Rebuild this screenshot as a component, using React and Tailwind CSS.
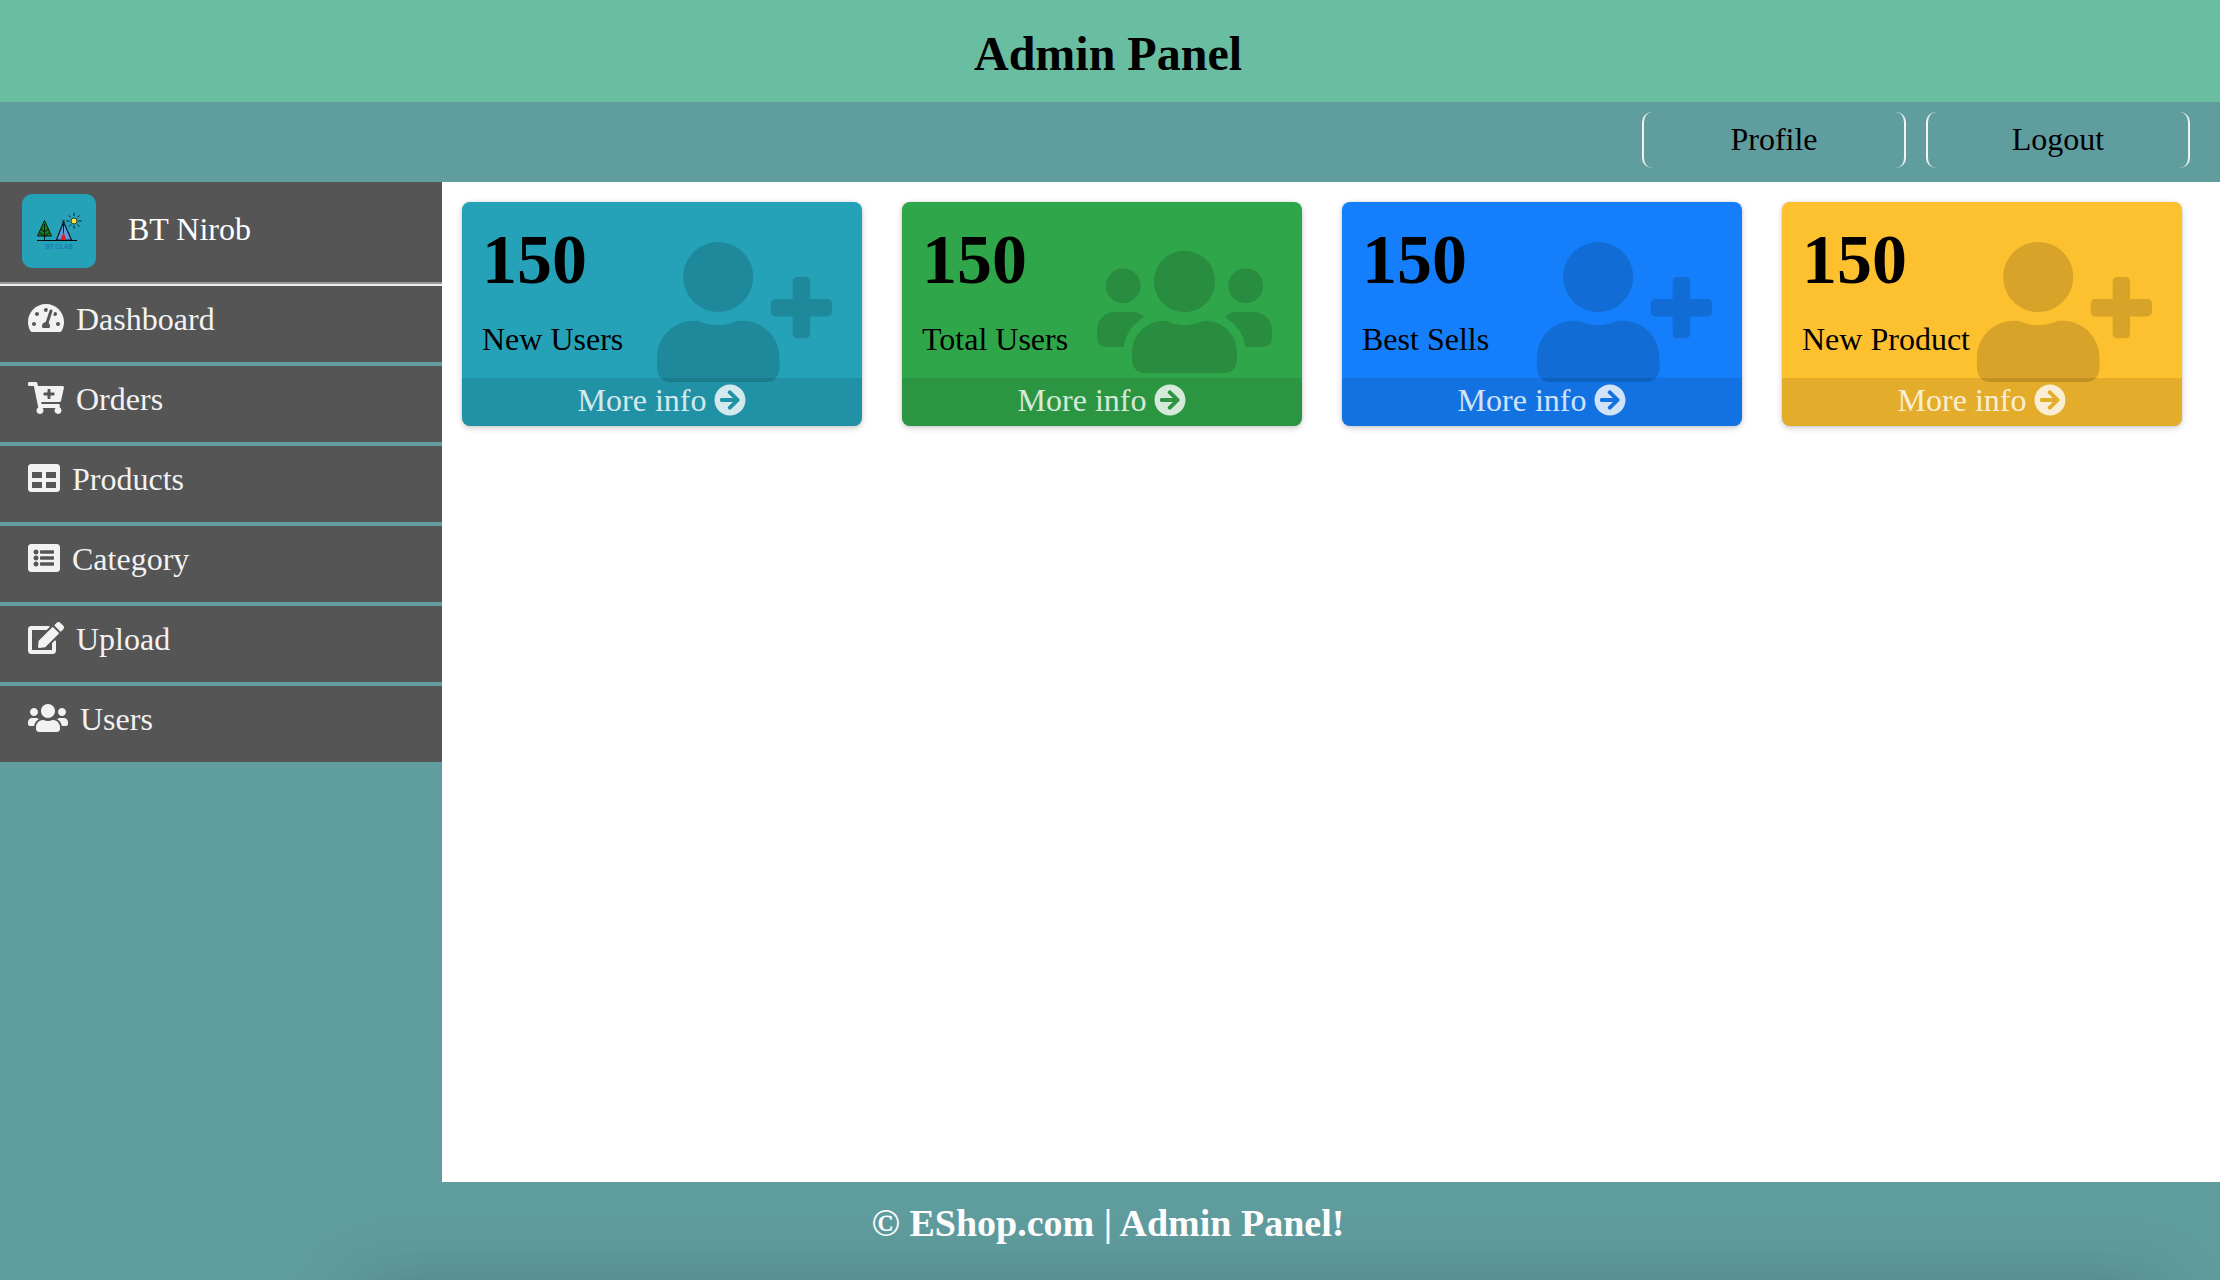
import {
  FaTachometerAlt, FaCartPlus, FaTable, FaListAlt, FaEdit, FaUsers, FaUserPlus, FaArrowCircleRight,
} from "react-icons/fa";

const links = [
  { label: "Dashboard", Icon: FaTachometerAlt, size: "w-9 h-8" },
  { label: "Orders", Icon: FaCartPlus, size: "w-9 h-8" },
  { label: "Products", Icon: FaTable, size: "w-8 h-8" },
  { label: "Category", Icon: FaListAlt, size: "w-8 h-8" },
  { label: "Upload", Icon: FaEdit, size: "w-9 h-8" },
  { label: "Users", Icon: FaUsers, size: "w-10 h-8" },
];

const cards = [
  { label: "New Users", Icon: FaUserPlus, color: "bg-[#25a2b8]" },
  { label: "Total Users", Icon: FaUsers, color: "bg-[#30a64a]" },
  { label: "Best Sells", Icon: FaUserPlus, color: "bg-[#157ffb]" },
  { label: "New Product", Icon: FaUserPlus, color: "bg-[#fdc02f]" },
];

function Logo() {
  return (
    <svg viewBox="0 0 74 74" className="size-[74px] rounded-[10px] bg-[#25a2b8]" aria-label="BT Clab">
      <path d="M22.5 26.5 15.5 42h14z" fill="#168016" stroke="#0b1a10" strokeWidth="1" />
      <path d="M22.5 30v16M18.5 35l4 3 4-3M17.5 38.500l5 4 5-4" fill="none" stroke="#0b1a10" strokeWidth="1" />
      <path d="M41.500 28 34.500 46h15z" fill="#5b9be0" stroke="#101820" strokeWidth="1.2" />
      <path d="M41.500 30v16M42.500 26l-2 3M40.500 26l2 3" stroke="#101820" strokeWidth="1" />
      <path d="M41.500 38 38.500 46h6z" fill="#d81f30" />
      <path d="M15 46.500h40" stroke="#0a0a0a" strokeWidth="1" />
      <g stroke="#101820" strokeWidth="1">
        <path d="M52 19v3M52 31.500v3M44.500 27H47.500M56.500 27h3M47 21.500l1.500 1.500M55.500 30.500l2 2M57.500 21.500l-2 2M47 32.500l2-2" />
        <circle cx="52" cy="27" r="3" fill="#ffdf3c" strokeWidth="0.8" />
      </g>
      <text x="37" y="54.500" textAnchor="middle" fontSize="7" fill="#1c6fb4" className="font-[Roboto,sans-serif]">BT CLAB</text>
    </svg>
  );
}

export default function App() {
  return (
    <div className="flex min-h-screen flex-col bg-[#609d9f] font-['Liberation_Serif',serif] text-[32px] leading-[34px] text-black">
      <header className="bg-[#69bea1] pt-[26px] pr-1 pb-5 text-center">
        <h1 className="text-5xl leading-[56px] font-bold">Admin Panel</h1>
      </header>
      <nav className="flex justify-end gap-5 pt-2.5 pr-[30px] pb-3.5">
        {["Profile", "Logout"].map((label) => (
          <a key={label} href="#" className="h-14 w-[264px] rounded-[10px] border-x-2 border-[#f2f2f2] pt-2.5 text-center">
            {label}
          </a>
        ))}
      </nav>
      <div className="flex flex-1">
        <aside className="w-[442px] shrink-0 text-[#f2f2f2]">
          <div className="flex h-[100px] items-start bg-[#555] pt-3 pl-[22px] text-white">
            <Logo />
            <span className="pt-[18px] pl-8">BT Nirob</span>
          </div>
          <hr className="border-t-2 border-b-2 border-t-[#9a9a9a] border-b-[#eee]" />
          <ul className="flex flex-col gap-1">
            {links.map(({ label, Icon, size }) => (
              <li key={label}>
                <a href="#" className="flex h-[76px] items-start gap-3 bg-[#555] pt-4 pl-7">
                  <Icon className={size} />
                  <span>{label}</span>
                </a>
              </li>
            ))}
          </ul>
        </aside>
        <main className="flex-1 bg-white pt-5 pr-[38px] pl-5">
          <div className="grid grid-cols-4 gap-10">
            {cards.map(({ label, Icon, color }) => (
              <section key={label} className={`relative overflow-hidden rounded-lg shadow-[0_0_2px_rgba(0,0,0,.125),0_2px_6px_rgba(0,0,0,.2)] ${color}`}>
                <div className="h-44 pt-5 pl-5">
                  <h2 className="text-[70px] leading-[76px] font-bold">150</h2>
                  <p className="pt-6">{label}</p>
                </div>
                <Icon className="absolute top-[40px] right-[30px] h-[140px] w-[175px] text-black/15" />
                <a href="#" className="relative flex h-12 items-center justify-center gap-2 bg-black/10 pb-1 text-white/80">
                  More info
                  <FaArrowCircleRight className="size-8" />
                </a>
              </section>
            ))}
          </div>
        </main>
      </div>
      <footer className="relative h-[98px] overflow-hidden pt-5 pr-1 text-center text-white">
        <h2 className="text-[38px] leading-[42px] font-bold">© EShop.com | Admin Panel!</h2>
        <div className="pointer-events-none absolute top-full right-12 left-[350px] h-20 shadow-[0_0_80px_rgba(0,0,0,.16)]" />
      </footer>
    </div>
  );
}
